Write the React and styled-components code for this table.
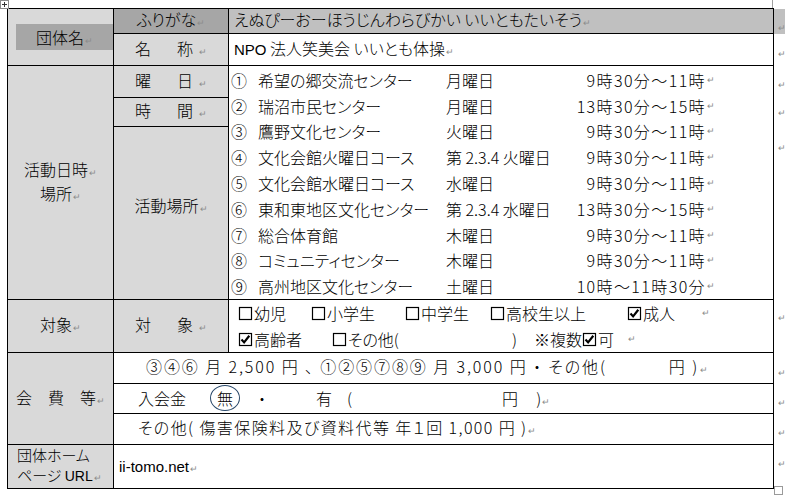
import React from 'react';
import styled, { createGlobalStyle } from 'styled-components';

const GlobalStyle = createGlobalStyle`
  body {
    margin: 0;
    background: #fff;
    font-family: "Noto Sans CJK JP", "DejaVu Sans", sans-serif;
    font-weight: 300;
    color: #000;
  }
`;

const Page = styled.div`
  position: relative;
  width: 785px;
  height: 495px;
  padding: 8px 0 0 7px;
  box-sizing: border-box;
  overflow: hidden;
`;

const MoveHandle = styled.svg`
  position: absolute;
  left: 0;
  top: 0;
`;

const RulerTick = styled.div`
  position: absolute;
  left: 772px;
  top: 0;
  width: 1px;
  height: 8px;
  background: #a0a0a0;
`;

const ResizeHandle = styled.div`
  position: absolute;
  left: 774px;
  top: 486px;
  width: 7px;
  height: 7px;
  border: 1px solid #9a9a9a;
  background: #fff;
`;

const Sheet = styled.table`
  border-collapse: collapse;
  table-layout: fixed;
  width: 778px;
  font-feature-settings: "palt";
`;

const Row = styled.tr`
  height: ${(p) => p.$h}px;
`;

const Cell = styled.td`
  border: 1px solid #000;
  background: ${(p) => p.$bg || '#fff'};
  text-align: ${(p) => p.$align || 'left'};
  vertical-align: ${(p) => p.$valign || 'middle'};
  padding: ${(p) => p.$pad || '0 5px'};
  font-size: 16px;
  line-height: 20px;
  white-space: nowrap;
`;

const EndCell = styled.td`
  border: none;
  padding: ${(p) => p.$top || 0}px 0 0 3px;
  vertical-align: top;
  background: ${(p) => p.$bg || 'transparent'};
  line-height: 10px;
`;

const Mark = styled.span`
  font-family: "DejaVu Sans", sans-serif;
  font-size: 9px;
  color: #8c8c8c;
  margin-left: 1px;
  letter-spacing: 0;
`;

const Shade = styled.div`
  background: #a6a6a6;
  margin-left: 3px;
  height: 26px;
  line-height: 26px;
  text-align: center;
`;

const Spread = styled.span`
  letter-spacing: ${(p) => p.$ls || 0}px;
`;

const Stack = styled.div`
  text-align: ${(p) => p.$align || 'center'};
  line-height: ${(p) => p.$lh || 20}px;
  font-size: ${(p) => p.$size || 16}px;
`;

const Latin = styled.span`
  font-family: "Liberation Sans", sans-serif;
  font-weight: 400;
  font-size: ${(p) => p.$size || 15}px;
`;

const Schedule = styled.div`
  display: grid;
  grid-template-columns: 215px 118px 142px 12px;
  grid-auto-rows: 25.8px;
  align-items: center;
`;

const Place = styled.div`
  display: flex;
`;

const Num = styled.span`
  width: 27px;
  flex: none;
`;

const Day = styled.div``;

const Time = styled.div`
  text-align: right;
  letter-spacing: 1.4px;
`;

const Checks = styled.div`
  display: flex;
  align-items: center;
  height: 26px;
`;

const CheckItem = styled.span`
  display: inline-flex;
  align-items: center;
  width: ${(p) => (p.$w ? `${p.$w}px` : 'auto')};
  flex: none;
`;

const BoxFrame = styled.svg`
  flex: none;
  margin-right: 1px;
`;

const CheckBox = ({ checked }) => (
  <BoxFrame width="15" height="15" viewBox="0 0 15 15">
    <rect x="1.5" y="1.5" width="12" height="12" fill="none" stroke="#000" strokeWidth="1.2" />
    {checked && <path d="M3.5 7.6l2.6 2.8 5.2-6.6" fill="none" stroke="#000" strokeWidth="2.2" />}
  </BoxFrame>
);

const FeeLine = styled.div`
  padding-left: ${(p) => p.$indent || 0}px;
  letter-spacing: ${(p) => p.$ls || 0}px;
`;

const Circled = styled.span`
  display: inline-block;
  border: 1px solid #2b4a6b;
  border-radius: 50%;
  padding: 2px 6px;
  line-height: 20px;
`;

const Gap = styled.span`
  display: inline-block;
  width: ${(p) => p.$w}px;
`;

const LIGHT = '#d9d9d9';
const DARK = '#a6a6a6';
const MID = '#c0c0c0';

const schedule = [
  ['①', '希望の郷交流センター', '月曜日', '9時30分～11時'],
  ['②', '瑞沼市民センター', '月曜日', '13時30分～15時'],
  ['③', '鷹野文化センター', '火曜日', '9時30分～11時'],
  ['④', '文化会館火曜日コース', '第 2.3.4 火曜日', '9時30分～11時'],
  ['⑤', '文化会館水曜日コース', '水曜日', '9時30分～11時'],
  ['⑥', '東和東地区文化センター', '第 2.3.4 水曜日', '13時30分～15時'],
  ['⑦', '総合体育館', '木曜日', '9時30分～11時'],
  ['⑧', 'コミュニティセンター', '木曜日', '9時30分～11時'],
  ['⑨', '高州地区文化センター', '土曜日', '10時～11時30分'],
];

const M = () => <Mark>↵</Mark>;

export default function App() {
  return (
    <Page>
      <GlobalStyle />
      <MoveHandle width="9" height="9" viewBox="0 0 9 9">
        <rect x="0.5" y="0.5" width="8" height="8" fill="#fff" stroke="#8a8a8a" />
        <path d="M4.5 2v5M2 4.5h5" stroke="#333" strokeWidth="1" />
      </MoveHandle>
      <RulerTick />
      <ResizeHandle />
      <Sheet>
        <colgroup>
          <col style={{ width: 106 }} />
          <col style={{ width: 115 }} />
          <col style={{ width: 545 }} />
          <col style={{ width: 12 }} />
        </colgroup>
        <tbody>
          <Row $h={25}>
            <Cell rowSpan={2} $bg={LIGHT} $pad="0 0 0 5px">
              <Shade>団体名<M /></Shade>
            </Cell>
            <Cell $bg={DARK} $align="center">ふりがな<M /></Cell>
            <Cell $bg={MID}>えぬぴーおーほうじんわらびかい いいともたいそう<M /></Cell>
            <EndCell $bg={MID} $top={10}><Mark>↵</Mark></EndCell>
          </Row>
          <Row $h={32}>
            <Cell $bg={LIGHT} $align="center"><Spread $ls={5}>名　称</Spread><M /></Cell>
            <Cell><Latin>NPO</Latin> 法人笑美会 いいとも体操<M /></Cell>
            <EndCell $top={11}><Mark>↵</Mark></EndCell>
          </Row>
          <Row $h={32}>
            <Cell rowSpan={3} $bg={LIGHT}>
              <Stack>活動日時<M /></Stack>
              <Stack>場所<M /></Stack>
            </Cell>
            <Cell $bg={LIGHT} $align="center"><Spread $ls={5}>曜　日</Spread><M /></Cell>
            <Cell rowSpan={3} $valign="top" $pad="1px 0 0 2px">
              <Schedule>
                {schedule.map(([n, place, day, time]) => (
                  <React.Fragment key={n}>
                    <Place><Num>{n}</Num>{place}</Place>
                    <Day>{day}</Day>
                    <Time>{time}</Time>
                    <M />
                  </React.Fragment>
                ))}
              </Schedule>
            </Cell>
            <EndCell $top={10}><Mark>↵</Mark></EndCell>
          </Row>
          <Row $h={29}>
            <Cell $bg={LIGHT} $align="center"><Spread $ls={5}>時　間</Spread><M /></Cell>
            <EndCell $top={6}><Mark>↵</Mark></EndCell>
          </Row>
          <Row $h={173}>
            <Cell $bg={LIGHT} $align="center" $pad="0 5px 12px">活動場所<M /></Cell>
            <EndCell $top={12}><Mark>↵</Mark></EndCell>
          </Row>
          <Row $h={52}>
            <Cell $bg={LIGHT} $align="center">対象<M /></Cell>
            <Cell $bg={LIGHT} $align="center"><Spread $ls={5}>対　象</Spread><M /></Cell>
            <Cell $pad="0 0 0 9px">
              <Checks>
                <CheckItem $w={73}><CheckBox />幼児</CheckItem>
                <CheckItem $w={94}><CheckBox />小学生</CheckItem>
                <CheckItem $w={85}><CheckBox />中学生</CheckItem>
                <CheckItem $w={137}><CheckBox />高校生以上</CheckItem>
                <CheckItem $w={74}><CheckBox checked />成人</CheckItem>
                <CheckItem><M /></CheckItem>
              </Checks>
              <Checks>
                <CheckItem $w={94}><CheckBox checked />高齢者</CheckItem>
                <CheckItem $w={180}><CheckBox />その他(</CheckItem>
                <CheckItem $w={22}>)</CheckItem>
                <CheckItem $w={93}>※複数<CheckBox checked />可</CheckItem>
                <CheckItem><M /></CheckItem>
              </Checks>
            </Cell>
            <EndCell $top={9}><Mark>↵</Mark></EndCell>
          </Row>
          <Row $h={31}>
            <Cell rowSpan={3} $bg={LIGHT} $align="center">会　費　等<M /></Cell>
            <Cell colSpan={2}>
              <FeeLine $indent={27} $ls={1.9}>
                ③④⑥ 月 2,500 円 、 ①②⑤⑦⑧⑨ 月 3,000 円 ・ その他(<Gap $w={62} />円 )<M />
              </FeeLine>
            </Cell>
            <EndCell $top={11}><Mark>↵</Mark></EndCell>
          </Row>
          <Row $h={30}>
            <Cell colSpan={2}>
              <FeeLine $indent={19}>
                入会金<Gap $w={24} /><Circled>無</Circled><Gap $w={18} />・<Gap $w={50} />有<Gap $w={15} />(<Gap $w={150} />円<Gap $w={18} />)<M />
              </FeeLine>
            </Cell>
            <EndCell $top={10}><Mark>↵</Mark></EndCell>
          </Row>
          <Row $h={31}>
            <Cell colSpan={2}>
              <FeeLine $indent={19} $ls={1.4}>
                その他( 傷害保険料及び資料代等 年１回 1,000 円 )<M />
              </FeeLine>
            </Cell>
            <EndCell $top={10}><Mark>↵</Mark></EndCell>
          </Row>
          <Row $h={41}>
            <Cell $bg={LIGHT} $pad="0 0 0 9px">
              <Stack $align="left" $lh={20} $size={15}>団体ホーム</Stack>
              <Stack $align="left" $lh={20} $size={15}>ページ <Latin $size={14}>URL</Latin><M /></Stack>
            </Cell>
            <Cell colSpan={2}><Latin>ii-tomo.net</Latin><M /></Cell>
            <EndCell $top={10}><Mark>↵</Mark></EndCell>
          </Row>
        </tbody>
      </Sheet>
    </Page>
  );
}
